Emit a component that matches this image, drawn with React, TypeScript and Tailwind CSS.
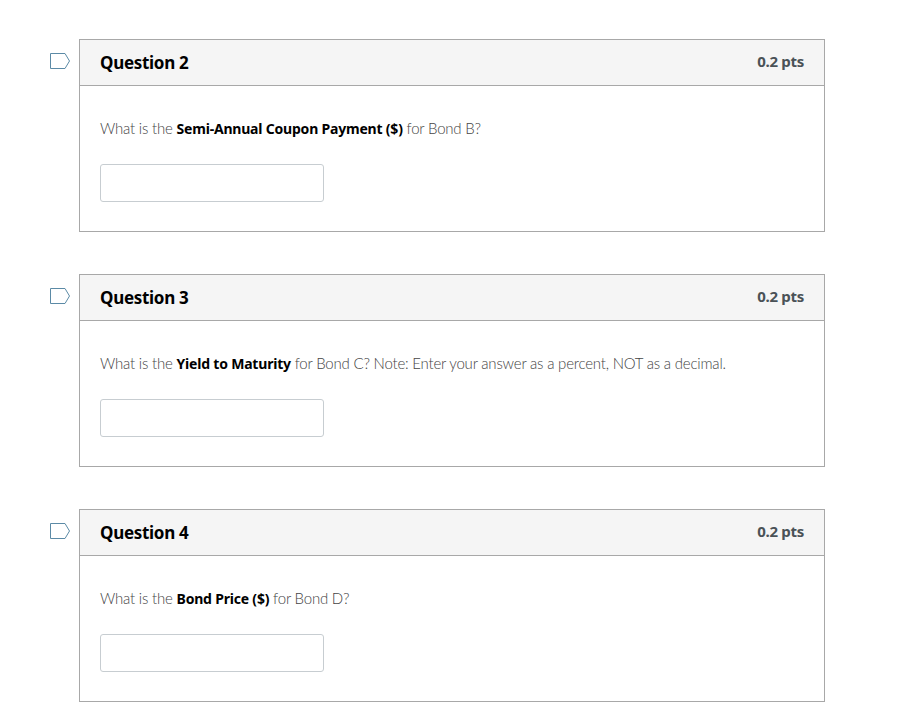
const questions = [
  {
    title: "Question 2",
    before: "What is the ",
    bold: "Semi-Annual Coupon Payment ($)",
    after: " for Bond B?",
  },
  {
    title: "Question 3",
    before: "What is the ",
    bold: "Yield to Maturity",
    after: " for Bond C? Note: Enter your answer as a percent, NOT as a decimal.",
  },
  {
    title: "Question 4",
    before: "What is the ",
    bold: "Bond Price ($)",
    after: " for Bond D?",
  },
];

function Flag() {
  return (
    <svg width="21" height="16" viewBox="0 0 21 16" fill="none" className="mt-[14px] shrink-0">
      <path d="M0.5 0.5H15L19.5 8L15 15.5H0.5Z" stroke="#5b8aa6" strokeWidth="1" />
    </svg>
  );
}

export default function App() {
  return (
    <div className="min-h-[727px] bg-white pt-[39px] pl-[50px] font-['Lato','Noto_Sans',sans-serif]">
      <div className="flex flex-col gap-[42px]">
        {questions.map((q) => (
          <div key={q.title} className="flex items-start gap-[8px]">
            <Flag />
            <div className="w-[746px] border border-[#a8a8a8]">
              <div className="flex h-[46px] items-center justify-between border-b border-[#a8a8a8] bg-[#f5f5f5] px-[20px]">
                <h2 className="font-['Noto_Sans',sans-serif] text-[17px] font-bold tracking-[-0.3px] text-[#000]">
                  {q.title}
                </h2>
                <span className="-mt-[2px] font-['Noto_Sans',sans-serif] text-[15px] font-bold tracking-[-0.3px] text-[#4a5257]">
                  0.2 pts
                </span>
              </div>
              <div className="h-[145px] px-[20px] pt-[32px]">
                <p className="text-[15px] leading-[20px] font-light tracking-[-0.2px] text-[#444]">
                  {q.before}
                  <strong className="font-['Noto_Sans',sans-serif] text-[14px] font-bold tracking-[-0.2px] text-[#000]">
                    {q.bold}
                  </strong>
                  {q.after}
                </p>
                <input
                  type="text"
                  aria-label={q.title}
                  className="mt-[25px] block h-[38px] w-[224px] rounded-[3px] border border-[#c7cdd1] bg-white"
                />
              </div>
            </div>
          </div>
        ))}
      </div>
    </div>
  );
}
